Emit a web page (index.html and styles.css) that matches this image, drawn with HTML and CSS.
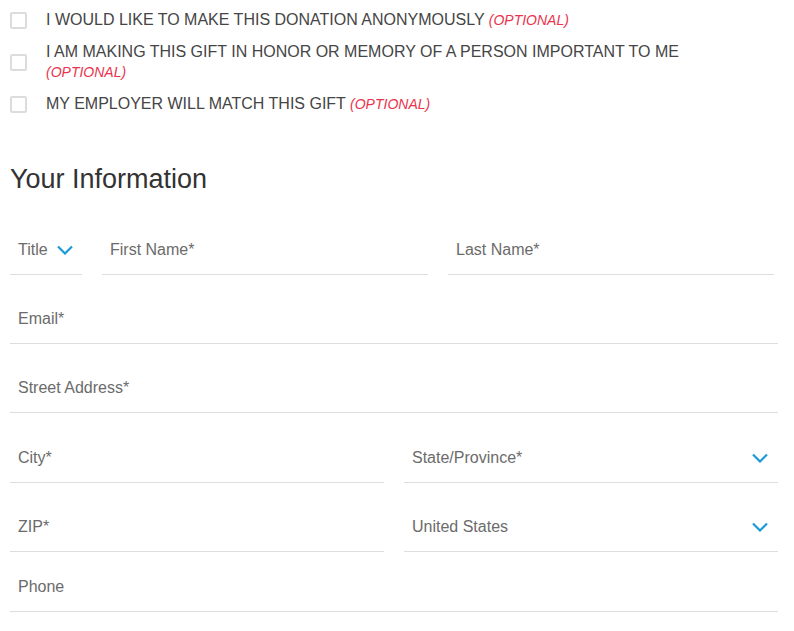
FILE: index.html
```html
<!DOCTYPE html>
<html>
<head>
<meta charset="utf-8">
<link rel="stylesheet" href="styles.css">
</head>
<body>
<div class="page">
  <div class="checks">
    <label class="check"><span class="box"></span><span class="check-text">I WOULD LIKE TO MAKE THIS DONATION ANONYMOUSLY <em class="opt">(OPTIONAL)</em></span></label>
    <label class="check"><span class="box"></span><span class="check-text">I AM MAKING THIS GIFT IN HONOR OR MEMORY OF A PERSON IMPORTANT TO ME<br><em class="opt">(OPTIONAL)</em></span></label>
    <label class="check"><span class="box"></span><span class="check-text">MY EMPLOYER WILL MATCH THIS GIFT <em class="opt">(OPTIONAL)</em></span></label>
  </div>

  <h2 class="heading">Your Information</h2>

  <div class="row row-name">
    <div class="field field-title"><span class="label">Title</span><svg class="chev" width="16" height="10" viewBox="0 0 16 10"><path d="M1 1.5 L8 8.5 L15 1.5" fill="none" stroke="#1b9ad6" stroke-width="2.2"/></svg></div>
    <div class="field grow"><span class="label">First Name*</span></div>
    <div class="field grow"><span class="label">Last Name*</span></div>
  </div>
  <div class="row"><div class="field grow"><span class="label">Email*</span></div></div>
  <div class="row"><div class="field grow"><span class="label">Street Address*</span></div></div>
  <div class="row row-city">
    <div class="field grow"><span class="label">City*</span></div>
    <div class="field grow select"><span class="label">State/Province*</span><svg class="chev" width="16" height="10" viewBox="0 0 16 10"><path d="M1 1.5 L8 8.5 L15 1.5" fill="none" stroke="#1b9ad6" stroke-width="2.2"/></svg></div>
  </div>
  <div class="row">
    <div class="field grow"><span class="label">ZIP*</span></div>
    <div class="field grow select"><span class="label">United States</span><svg class="chev" width="16" height="10" viewBox="0 0 16 10"><path d="M1 1.5 L8 8.5 L15 1.5" fill="none" stroke="#1b9ad6" stroke-width="2.2"/></svg></div>
  </div>
  <div class="row row-phone"><div class="field grow"><span class="label">Phone</span></div></div>
</div>
</body>
</html>
```

FILE: styles.css
```css
html, body {
  margin: 0;
  padding: 0;
  background: #ffffff;
}
body {
  font-family: "Liberation Sans", Arial, sans-serif;
}
.page {
  padding: 10px 16px 0 10px;
}
.checks {
  display: flex;
  flex-direction: column;
  gap: 12px;
}
.check {
  display: flex;
  align-items: center;
  gap: 19px;
}
.box {
  flex: none;
  width: 13px;
  height: 13px;
  border: 2px solid #dcdcdc;
  border-radius: 2px;
  background: #fff;
}
.check-text {
  font-size: 16px;
  line-height: 20px;
  color: #454545;
  max-width: 720px;
}
.opt {
  font-size: 14px;
  color: #e8344e;
  font-style: italic;
}
.heading {
  margin: 49px 0 0 0;
  font-size: 27px;
  line-height: 32px;
  font-weight: normal;
  color: #333333;
}
.row {
  display: flex;
  gap: 20px;
  margin-top: 19px;
}
.row-name {
  margin-top: 30px;
  margin-right: 4px;
}
.row-city {
  margin-top: 20px;
}
.row-phone {
  margin-top: 10px;
}
.field {
  height: 50px;
  border-bottom: 1px solid #dddddd;
  display: flex;
  align-items: center;
  padding: 0 10px 0 8px;
  box-sizing: border-box;
}
.field-title {
  width: 72px;
  flex: none;
  gap: 9px;
}
.grow {
  flex: 1 1 0;
  min-width: 0;
}
.select {
  justify-content: space-between;
}
.label {
  font-size: 16px;
  color: #6b6b6b;
  line-height: 20px;
}
.chev {
  flex: none;
  display: block;
}
```
